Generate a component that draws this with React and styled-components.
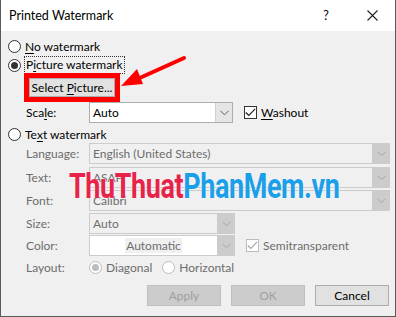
import React from 'react';
import styled, { createGlobalStyle } from 'styled-components';

const GlobalStyle = createGlobalStyle`
  html, body {
    margin: 0;
    padding: 0;
    background: #ffffff;
  }
  body {
    font-family: Lato, "Noto Sans", sans-serif;
    font-size: 12px;
  }
`;

const Window = styled.div`
  position: relative;
  width: 396px;
  height: 317px;
  box-sizing: border-box;
  border: 1px solid #5a5a5a;
  border-top: none;
  background: #f0f0f0;
  overflow: hidden;
`;

const TitleBar = styled.div`
  height: 31px;
  background: #ffffff;
  display: flex;
  align-items: center;
  padding-left: 8px;
  color: #000;
  font-size: 12.5px;
`;

const Title = styled.span`
  flex: 1;
`;

const TitleButton = styled.div`
  width: 30px;
  height: 31px;
  display: flex;
  align-items: center;
  justify-content: center;
  color: #000;
  margin-right: ${(p) => p.$mr || 0}px;
`;

const Body = styled.div`
  padding: 6px 0 0 7px;
  display: flex;
  flex-direction: column;
`;

const RadioRow = styled.label`
  display: flex;
  align-items: center;
  height: 18px;
  margin-top: ${(p) => p.$mt || 0}px;
  color: ${(p) => (p.$disabled ? '#6d6d6d' : '#000')};
`;

const Circle = styled.span`
  width: 13px;
  height: 13px;
  box-sizing: border-box;
  border-radius: 50%;
  border: 1px solid ${(p) => (p.$disabled ? '#bcbcbc' : '#333')};
  background: #fff;
  display: flex;
  align-items: center;
  justify-content: center;
  margin-right: 4px;
  flex-shrink: 0;
  &::after {
    content: '';
    width: 7px;
    height: 7px;
    border-radius: 50%;
    background: ${(p) => (p.$checked ? (p.$disabled ? '#bcbcbc' : '#333') : 'transparent')};
  }
`;

const Focus = styled.span`
  outline: 1px dotted #333;
  padding: 0 1px;
  line-height: 16px;
`;

const U = styled.span`
  text-decoration: underline;
  text-underline-offset: 2px;
`;

const SelectWrap = styled.div`
  margin: 4px 0 0 21px;
  width: 86px;
  height: 19px;
  box-shadow: 0 0 0 5px #ff0000;
`;

const Button = styled.button`
  width: ${(p) => p.$w || 74}px;
  height: ${(p) => p.$h || 21}px;
  box-sizing: border-box;
  border: 1px solid ${(p) => (p.$disabled ? '#bfbfbf' : '#adadad')};
  background: ${(p) => (p.$disabled ? '#cccccc' : '#e1e1e1')};
  color: ${(p) => (p.$disabled ? '#a0a0a0' : '#000')};
  font-family: Lato, "Noto Sans", sans-serif;
  font-size: 12px;
  white-space: nowrap;
  padding: 0;
  display: flex;
  align-items: center;
  justify-content: center;
`;

const FieldRow = styled.div`
  display: flex;
  align-items: center;
  height: 21px;
  padding-left: 18px;
  margin-top: ${(p) => p.$mt || 0}px;
`;

const Label = styled.span`
  width: 63px;
  color: ${(p) => (p.$disabled ? '#6d6d6d' : '#000')};
`;

const Combo = styled.div`
  width: ${(p) => p.$w}px;
  height: 21px;
  box-sizing: border-box;
  border: 1px solid ${(p) => (p.$disabled ? '#cccccc' : '#adadad')};
  background: ${(p) => (p.$white ? '#fff' : p.$disabled ? '#f0f0f0' : '#fff')};
  display: flex;
  align-items: stretch;
`;

const ComboText = styled.span`
  flex: 1;
  display: flex;
  align-items: center;
  justify-content: ${(p) => (p.$center ? 'center' : 'flex-start')};
  padding-left: ${(p) => (p.$center ? 0 : 3)}px;
  color: ${(p) => (p.$disabled ? '#6d6d6d' : '#000')};
  overflow: hidden;
  white-space: nowrap;
`;

const Highlight = styled.span`
  background: #f0f0f0;
  color: #6d6d6d;
  line-height: 15px;
  padding: 0 1px;
`;

const ComboArrow = styled.span`
  width: 16px;
  background: ${(p) => (p.$disabled ? '#cccccc' : '#e5e5e5')};
  border-left: 1px solid ${(p) => (p.$disabled ? '#cccccc' : '#d0d0d0')};
  display: flex;
  align-items: center;
  justify-content: center;
`;

const Check = styled.span`
  width: 13px;
  height: 13px;
  box-sizing: border-box;
  border: 1px solid ${(p) => (p.$disabled ? '#bcbcbc' : '#333')};
  background: #fff;
  margin: 0 4px 0 11px;
  display: flex;
  align-items: center;
  justify-content: center;
`;

const CheckLabel = styled.span`
  color: ${(p) => (p.$disabled ? '#6d6d6d' : '#000')};
`;

const LayoutRow = styled.div`
  display: flex;
  align-items: center;
  height: 18px;
  padding-left: 18px;
  margin-top: 2px;
`;

const InlineRadio = styled.span`
  display: flex;
  align-items: center;
  margin-right: ${(p) => p.$mr || 0}px;
  color: #6d6d6d;
`;

const Footer = styled.div`
  display: flex;
  justify-content: flex-end;
  gap: 10px;
  margin-top: 9px;
  width: 381px;
`;

const Arrow = styled.svg`
  position: absolute;
  left: 116px;
  top: 52px;
`;

const Watermark = styled.div`
  position: absolute;
  left: 68px;
  top: 167px;
  font-family: Roboto, "Liberation Sans", sans-serif;
  font-weight: 700;
  font-size: 35px;
  line-height: 40px;
  letter-spacing: -0.5px;
  white-space: nowrap;
  transform: scaleX(0.77);
  transform-origin: left center;
  text-shadow: 0 0 2px #fff;
`;

const Red = styled.span`
  color: #e8234a;
`;

const Blue = styled.span`
  color: #1b9fe8;
`;

const Chevron = ({ disabled }) => (
  <svg width="9" height="6" viewBox="0 0 9 6">
    <path d="M0.5 0.8 L4.5 4.8 L8.5 0.8" fill="none" stroke={disabled ? '#a6a6a6' : '#606060'} strokeWidth="1" />
  </svg>
);

const Tick = ({ disabled }) => (
  <svg width="11" height="9" viewBox="0 0 11 9">
    <path d="M0.8 4.5 L3.8 7.5 L10.2 0.8" fill="none" stroke={disabled ? '#a6a6a6' : '#222'} strokeWidth="1.2" />
  </svg>
);

function Dropdown({ w, value, disabled, center, white }) {
  return (
    <Combo $w={w} $disabled={disabled} $white={white}>
      <ComboText $disabled={disabled} $center={center}>{value}</ComboText>
      <ComboArrow $disabled={disabled}>
        <Chevron disabled={disabled} />
      </ComboArrow>
    </Combo>
  );
}

export default function App() {
  return (
    <>
      <GlobalStyle />
      <Window>
        <TitleBar>
          <Title>Printed Watermark</Title>
          <TitleButton $mr={16}>?</TitleButton>
          <TitleButton $mr={8}>
            <svg width="11" height="11" viewBox="0 0 11 11">
              <path d="M0.5 0.5 L10.5 10.5 M10.5 0.5 L0.5 10.5" stroke="#222" strokeWidth="1.1" />
            </svg>
          </TitleButton>
        </TitleBar>
        <Body>
          <RadioRow>
            <Circle />
            <span><U>N</U>o watermark</span>
          </RadioRow>
          <RadioRow $mt={1}>
            <Circle $checked />
            <Focus>P<U>i</U>cture watermark</Focus>
          </RadioRow>
          <SelectWrap>
            <Button $w={86} $h={19}>
              <span>Select <U>P</U>icture...</span>
            </Button>
          </SelectWrap>
          <FieldRow $mt={5}>
            <Label>Sca<U>l</U>e:</Label>
            <Dropdown w={144} value="Auto" />
            <Check>
              <Tick />
            </Check>
            <CheckLabel><U>W</U>ashout</CheckLabel>
          </FieldRow>
          <RadioRow $mt={2}>
            <Circle />
            <span>Te<U>x</U>t watermark</span>
          </RadioRow>
          <FieldRow $mt={0}>
            <Label $disabled>Language:</Label>
            <Dropdown w={301} value="English (United States)" disabled />
          </FieldRow>
          <FieldRow $mt={3}>
            <Label $disabled>Text:</Label>
            <Dropdown w={301} value="ASAP" disabled />
          </FieldRow>
          <FieldRow $mt={2}>
            <Label $disabled>Font:</Label>
            <Dropdown w={301} value="Calibri" disabled />
          </FieldRow>
          <FieldRow $mt={2}>
            <Label $disabled>Size:</Label>
            <Dropdown w={146} value="Auto" disabled />
          </FieldRow>
          <FieldRow $mt={1}>
            <Label $disabled>Color:</Label>
            <Combo $w={146} $disabled $white>
              <ComboText $center>
                <Highlight>Automatic</Highlight>
              </ComboText>
              <ComboArrow $disabled>
                <Chevron disabled />
              </ComboArrow>
            </Combo>
            <Check $disabled>
              <Tick disabled />
            </Check>
            <CheckLabel $disabled>Semitransparent</CheckLabel>
          </FieldRow>
          <LayoutRow>
            <Label $disabled>Layout:</Label>
            <InlineRadio $mr={10}>
              <Circle $checked $disabled />
              Diagonal
            </InlineRadio>
            <InlineRadio>
              <Circle $disabled />
              Horizontal
            </InlineRadio>
          </LayoutRow>
          <Footer>
            <Button $disabled>Apply</Button>
            <Button $disabled>OK</Button>
            <Button>Cancel</Button>
          </Footer>
        </Body>
        <Arrow width="72" height="40" viewBox="0 0 72 40">
          <path d="M67 6 L16 29" stroke="#ff0000" strokeWidth="4" strokeLinecap="round" />
          <path d="M4 34 L20 17 L26 32 Z" fill="#ff0000" />
        </Arrow>
        <Watermark>
          <Red>ThuThuat</Red>
          <Blue>PhanMem.vn</Blue>
        </Watermark>
      </Window>
    </>
  );
}
